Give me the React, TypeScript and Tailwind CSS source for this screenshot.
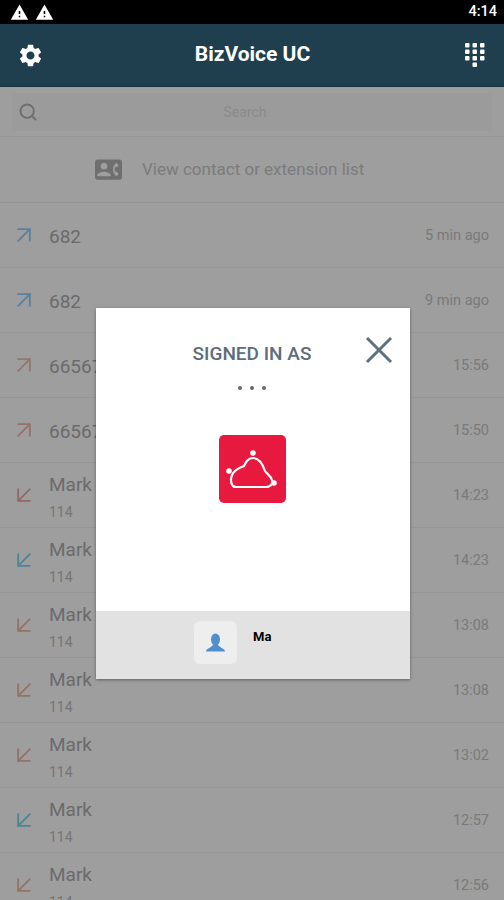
import { ArrowDownLeft, ArrowUpRight, Search } from 'lucide-react'
import { MdContactPhone, MdSettings, MdWarning } from 'react-icons/md'

interface CallRow {
  name: string
  sub?: string
  time: string
  dir: 'out' | 'in'
  color: string
}

const calls: CallRow[] = [
  { name: '682', time: '5 min ago', dir: 'out', color: 'text-[#8fd0ff]' },
  { name: '682', time: '9 min ago', dir: 'out', color: 'text-[#8fd0ff]' },
  { name: '66567', time: '15:56', dir: 'out', color: 'text-[#f0c0b0]' },
  { name: '66567', time: '15:50', dir: 'out', color: 'text-[#f0b8b0]' },
  { name: 'Mark', sub: '114', time: '14:23', dir: 'in', color: 'text-[#f0a8a8]' },
  { name: 'Mark', sub: '114', time: '14:23', dir: 'in', color: 'text-[#80d4f0]' },
  { name: 'Mark', sub: '114', time: '13:08', dir: 'in', color: 'text-[#f0b8a8]' },
  { name: 'Mark', sub: '114', time: '13:08', dir: 'in', color: 'text-[#f0b8a8]' },
  { name: 'Mark', sub: '114', time: '13:02', dir: 'in', color: 'text-[#f0b8a8]' },
  { name: 'Mark', sub: '114', time: '12:57', dir: 'in', color: 'text-[#80d4f0]' },
  { name: 'Mark', sub: '114', time: '12:56', dir: 'in', color: 'text-[#f0b8a8]' },
]

function CallItem({ call }: { call: CallRow }) {
  const Arrow = call.dir === 'out' ? ArrowUpRight : ArrowDownLeft
  return (
    <div className="flex h-[65px] shrink-0 items-center border-b border-[#f2f2f2] pl-[10px] pr-[15px]">
      <Arrow size={28} strokeWidth={1.6} className={`${call.color} mr-[11px] shrink-0`} />
      <div className="flex-1 pt-[4px]">
        <div className="text-[19px] leading-[22px] text-[#adadad]">{call.name}</div>
        {call.sub && <div className="mt-[7px] text-[14px] leading-[18px] text-[#bdbdbd]">{call.sub}</div>}
      </div>
      <div className="pt-[1px] text-[14.500px] text-[#c6c6c6]">{call.time}</div>
    </div>
  )
}

function DialpadIcon() {
  const cols = [0, 7.5, 15]
  const rows = [0, 6.5, 13]
  return (
    <svg width="20" height="25" viewBox="0 0 20 25" fill="#ffffff">
      {rows.map((y) =>
        cols.map((x) => <rect key={`${x}-${y}`} x={x} y={y} width="4.500" height="4.500" rx="1" />),
      )}
      <rect x="7.500" y="19.500" width="4.500" height="4.500" rx="1" />
    </svg>
  )
}

function CloudLogo() {
  return (
    <div className="h-[68px] w-[67px] rounded-[5px] bg-[#e8193f]">
      <svg width="67" height="68" viewBox="0 0 67 68" fill="none">
        <path
          d="M17 52H47C52 52 54 48 53 45C52 41 48 39 46 36C44 30 41 23 34 23C29 23 27 27 25 31C21 33 16 34 13 40C11 45 12 52 17 52Z"
          stroke="#ffffff"
          strokeWidth="2.200"
        />
        <circle cx="34" cy="18" r="2.800" fill="#ffffff" />
        <circle cx="10" cy="36" r="2.800" fill="#ffffff" />
        <circle cx="55" cy="48" r="2.800" fill="#ffffff" />
      </svg>
    </div>
  )
}

function PersonIcon() {
  return (
    <svg width="21" height="21" viewBox="0 0 21 21" fill="#4f8fd0">
      <ellipse cx="10.500" cy="6.500" rx="4.500" ry="6" />
      <path d="M1 18.500C1 15 7 15 8.500 11H12.500C14 15 20 15 20 18.500Z" />
    </svg>
  )
}

export default function App() {
  return (
    <div className="flex h-[900px] w-[504px] flex-col overflow-hidden bg-white font-['Roboto',sans-serif]">
      {/* Status bar */}
      <div className="flex h-6 shrink-0 items-center bg-black pl-[10px] pr-[7px] text-white">
        <MdWarning size={19} />
        <MdWarning size={19} className="ml-[6px]" />
        <span className="ml-auto text-[14.500px] font-medium">4:14</span>
      </div>

      {/* Header */}
      <div className="flex h-[63px] shrink-0 items-center justify-between border-b border-[#17303d] bg-[#1f3f4f] pl-[17px] pr-[19px] text-white">
        <MdSettings size={27} />
        <span className="mr-[4px] text-[21px] font-bold">BizVoice UC</span>
        <DialpadIcon />
      </div>

      <div className="relative flex-1 overflow-hidden">
        <div className="flex flex-col">
          <div className="h-[50px] shrink-0 border-b border-[#f2f2f2] px-[12px] pt-[6px]">
            <div className="relative flex h-[38px] items-center justify-center rounded-[4px] bg-[#fafafa] pr-[14px] text-[14px] text-[#e0e0e0]">
              <Search size={20} strokeWidth={2.25} className="absolute left-[6px] text-[#b0b0b0]" />
              Search
            </div>
          </div>
          <div className="flex h-[66px] shrink-0 items-center border-b border-[#f0f0f0] pl-[95px]">
            <MdContactPhone size={27} className="text-[#b4b4b4]" />
            <span className="ml-[20px] mt-[1px] text-[17px] text-[#c8c8c8]">View contact or extension list</span>
          </div>
          {calls.map((call, i) => (
            <CallItem key={i} call={call} />
          ))}
        </div>

        {/* Dim layer and dialog */}
        <div className="absolute inset-0 bg-black/[0.38]" />
        <div className="absolute left-[96px] top-[221px] flex h-[371px] w-[314px] flex-col bg-white shadow-[0_1px_3px_rgba(0,0,0,0.4)]">
          <button className="absolute right-[17px] top-[28px] text-[#5c7080]">
            <svg width="28" height="28" viewBox="0 0 28 28" fill="none" stroke="currentColor" strokeWidth="3">
              <path d="M2 2L26 26M26 2L2 26" />
            </svg>
          </button>
          <div className="mr-[2px] mt-[35px] text-center text-[19px] font-medium leading-[22px] text-[#5d6d7b]">SIGNED IN AS</div>
          <div className="mr-[2px] mt-[21px] flex justify-center gap-[8px]">
            <span className="h-[4px] w-[4px] rounded-full bg-[#666666]" />
            <span className="h-[4px] w-[4px] rounded-full bg-[#666666]" />
            <span className="h-[4px] w-[4px] rounded-full bg-[#666666]" />
          </div>
          <div className="mr-[2px] mt-[45px] flex justify-center">
            <CloudLogo />
          </div>
          <div className="mt-auto flex h-[68px] bg-[#e2e2e2] pl-[98px] pt-[10px]">
            <div className="flex h-[43px] w-[43px] items-start justify-center rounded-[6px] bg-[#eeeeee] pt-[12px]">
              <PersonIcon />
            </div>
            <span className="ml-[16px] mt-[8px] text-[13px] font-bold leading-[16px] text-black">Ma</span>
          </div>
        </div>
      </div>
    </div>
  )
}
